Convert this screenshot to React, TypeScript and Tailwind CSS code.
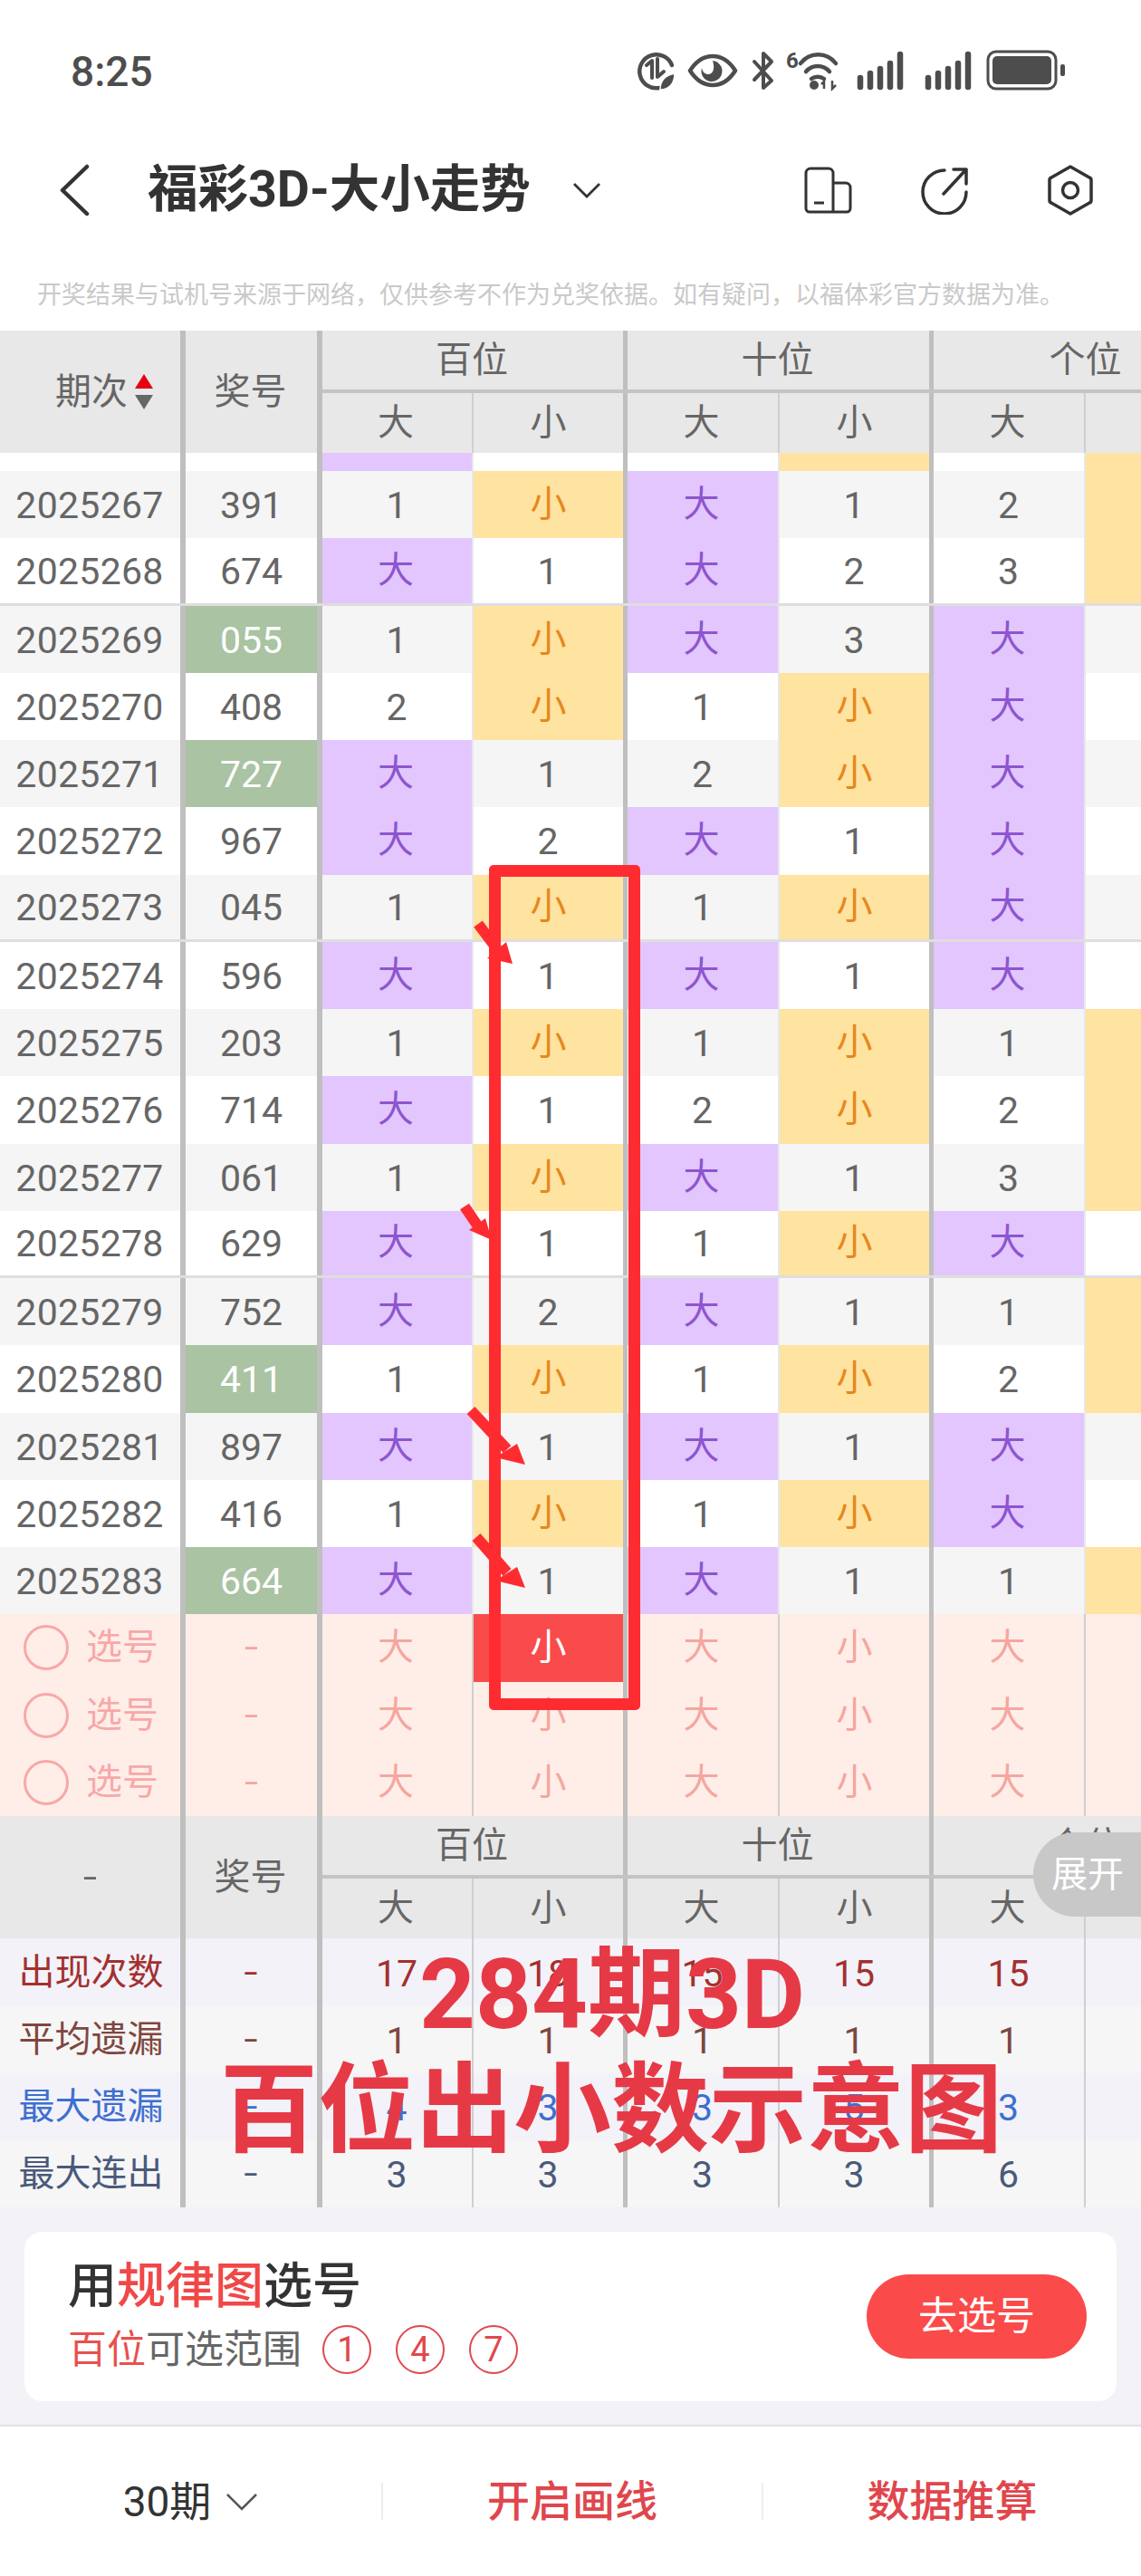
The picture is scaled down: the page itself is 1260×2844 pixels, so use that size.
import React from "react";

const COLS = [
  "w-[205px] border-r-[6px] border-[#bfbfbf]",
  "w-[151px] border-r-[6px] border-[#bfbfbf]",
  "w-[167px] border-r-2 border-[#e8e8e8]",
  "w-[170px] border-r-[5px] border-[#bfbfbf]",
  "w-[168px] border-r-2 border-[#e8e8e8]",
  "w-[170px] border-r-[5px] border-[#bfbfbf]",
  "w-[168px] border-r-2 border-[#e8e8e8]",
  "w-[61px]",
];
const COLS_DARK = [
  "w-[205px] border-r-[6px] border-[#bfbfbf]",
  "w-[151px] border-r-[6px] border-[#bfbfbf]",
  "w-[167px] border-r-2 border-[#cfcfcf]",
  "w-[170px] border-r-[5px] border-[#bfbfbf]",
  "w-[168px] border-r-2 border-[#cfcfcf]",
  "w-[170px] border-r-[5px] border-[#bfbfbf]",
  "w-[168px] border-r-2 border-[#cfcfcf]",
  "w-[61px]",
];

type R = [string, string, boolean, string[]];
const ROWS: R[] = [
  ["2025267", "391", false, ["1", "小", "大", "1", "2", "Y"]],
  ["2025268", "674", false, ["大", "1", "大", "2", "3", "Y"]],
  ["2025269", "055", true, ["1", "小", "大", "3", "大", ""]],
  ["2025270", "408", false, ["2", "小", "1", "小", "大", ""]],
  ["2025271", "727", true, ["大", "1", "2", "小", "大", ""]],
  ["2025272", "967", false, ["大", "2", "大", "1", "大", ""]],
  ["2025273", "045", false, ["1", "小", "1", "小", "大", ""]],
  ["2025274", "596", false, ["大", "1", "大", "1", "大", ""]],
  ["2025275", "203", false, ["1", "小", "1", "小", "1", "Y"]],
  ["2025276", "714", false, ["大", "1", "2", "小", "2", "Y"]],
  ["2025277", "061", false, ["1", "小", "大", "1", "3", "Y"]],
  ["2025278", "629", false, ["大", "1", "1", "小", "大", ""]],
  ["2025279", "752", false, ["大", "2", "大", "1", "1", "Y"]],
  ["2025280", "411", true, ["1", "小", "1", "小", "2", "Y"]],
  ["2025281", "897", false, ["大", "1", "大", "1", "大", ""]],
  ["2025282", "416", false, ["1", "小", "1", "小", "大", ""]],
  ["2025283", "664", true, ["大", "1", "大", "1", "1", "Y"]],
];

function DataCell({ col, v }: { col: number; v: string }) {
  const cls =
    v === "大"
      ? "bg-[#e2c6fd] text-[#8d55cf] pr-[3px]"
      : v === "小" || v === "Y"
        ? "bg-[#fee3a1] text-[#e8871c]"
        : "text-[#666666] text-[41px] pt-[3px] pr-[1px]";
  return (
    <div className={`${COLS[col]} ${cls} shrink-0 flex items-center justify-center`}>
      {v === "Y" ? "" : v}
    </div>
  );
}

function TableHead({ first }: { first: React.ReactNode }) {
  return (
    <div className="flex h-[135px] bg-[#e8e8e8] text-[#666666] overflow-hidden">
      <div className={`${COLS_DARK[0]} shrink-0 flex items-center`}>{first}</div>
      <div className={`${COLS_DARK[1]} shrink-0 flex items-center justify-center pr-[2px]`}>奖号</div>
      <div className="flex flex-col">
        <div className="flex h-[69px] border-b-4 border-[#c4c4c4]">
          <div className="w-[337px] shrink-0 border-r-[5px] border-[#bfbfbf] flex items-center justify-center pr-[2px]">百位</div>
          <div className="w-[338px] shrink-0 border-r-[5px] border-[#bfbfbf] flex items-center justify-center pr-[2px]">十位</div>
          <div className="w-[337px] shrink-0 flex items-center justify-center pr-[2px]">个位</div>
        </div>
        <div className="flex h-[66px]">
          {["大", "小", "大", "小", "大", ""].map((t, i) => (
            <div key={i} className={`${COLS_DARK[i + 2]} ${t === "大" ? "pr-[3px]" : ""} shrink-0 flex items-center justify-center`}>{t}</div>
          ))}
        </div>
      </div>
    </div>
  );
}

function StatRow({ label, vals, cls }: { label: string; vals: string[]; cls: string }) {
  return (
    <div className={`flex h-[74.25px] ${cls}`}>
      <div className={`${COLS_DARK[0]} shrink-0 flex items-center justify-center pl-[2px] text-[40px]`}>{label}</div>
      {vals.concat([""]).map((v, i) => (
        <div
          key={i}
          className={`${COLS_DARK[i + 1]} ${v === "-" ? "text-[56px] font-light pb-[2px]" : "text-[41px] pt-[3px]"} shrink-0 flex items-center justify-center pr-[1px]`}
        >
          {v}
        </div>
      ))}
    </div>
  );
}

function SelectRow({ hot }: { hot?: boolean }) {
  return (
    <div className="flex h-[74.4px] bg-[#ffeee8] text-[#f5a6a0]">
      <div className={`${COLS_DARK[0]} shrink-0 flex items-center pl-[26px] gap-[19px] text-[#f8a8a8]`}>
        <div className="w-[50px] h-[50px] rounded-full border-[3px] border-[#f8a8a8]" />
        <span>选号</span>
      </div>
      <div className={`${COLS_DARK[1]} shrink-0 flex items-center justify-center text-[56px] font-light pb-[2px]`}>-</div>
      {["大", "小", "大", "小", "大", ""].map((t, i) => (
        <div
          key={i}
          className={`${COLS_DARK[i + 2]} ${t === "大" ? "pr-[3px]" : ""} shrink-0 flex items-center justify-center ${hot && i === 1 ? "bg-[#f94b4b] text-white" : ""}`}
        >
          {t}
        </div>
      ))}
    </div>
  );
}

function StatusIcons() {
  return (
    <svg width="480" height="50" viewBox="700 54 480 50" fill="none" className="block">
      <path d="M742 72a18.500 18.500 0 1 0-14 25" stroke="#4d4d4d" strokeWidth="4.500" strokeLinecap="round" />
      <path d="M714 72l6-5v19M726 65v20l7-6" stroke="#4d4d4d" strokeWidth="4" strokeLinecap="round" strokeLinejoin="round" />
      <path d="M729 99c0-11 6-16 16-18 0 10-5 18-16 18z" fill="#4d4d4d" stroke="#fff" strokeWidth="1.500" />
      <path d="M762 78c7-11 16-16 25-16s18 5 25 16c-7 11-16 16-25 16s-18-5-25-16z" stroke="#4d4d4d" strokeWidth="4.500" strokeLinejoin="round" />
      <path d="M787 67a11.500 11.500 0 1 1-12 8c1 5 4 7 7 7 5 0 8-6 5-15z" fill="#4d4d4d" />
      <path d="M833 68l19 21-9 8V76M833 88l19-20-9-9v18" stroke="#4d4d4d" strokeWidth="4" strokeLinejoin="round" strokeLinecap="round" />
      <text x="868" y="75" fontFamily="Roboto" fontSize="24" fontWeight="700" fill="#4d4d4d">6</text>
      <path d="M884 70c10-13 29-13 39 0M890 79c7-8 19-8 26 0M896 87c4-3 10-3 14 0" stroke="#4d4d4d" strokeWidth="4.500" strokeLinecap="round" />
      <circle cx="899" cy="94" r="5" fill="#4d4d4d" />
      <path d="M910 98v-8l-3 3M919 89v9l4-4" stroke="#4d4d4d" strokeWidth="2.500" />
      {[
        [950, 86],
        [961, 81],
        [972, 76],
        [983, 70],
        [994, 60],
        [1025, 86],
        [1036, 81],
        [1047, 76],
        [1058, 70],
        [1069, 60],
      ].map(([x, y]) => (
        <line key={x} x1={x} x2={x} y1={y} y2={96} stroke="#4d4d4d" strokeWidth="6.500" strokeLinecap="round" />
      ))}
      <rect x="1091" y="57" width="75" height="41" rx="9" stroke="#4d4d4d" strokeWidth="3" />
      <rect x="1096" y="62" width="65" height="31" rx="5" fill="#4d4d4d" />
      <rect x="1171" y="71" width="5" height="13" rx="2" fill="#4d4d4d" />
    </svg>
  );
}

function Arrow({ pts, head }: { pts: number[]; head: string }) {
  return (
    <>
      <line x1={pts[0]} y1={pts[1]} x2={pts[2]} y2={pts[3]} stroke="#fe2c30" strokeWidth="12" />
      <polygon points={head} fill="#fe2c30" />
    </>
  );
}

export default function App() {
  return (
    <div className="relative w-[1260px] h-[2844px] overflow-hidden bg-white font-['Roboto','Noto_Sans_CJK_SC',sans-serif] text-[40px] leading-none">
      {/* status bar */}
      <div className="h-[155px] flex items-start justify-between">
        <div className="pl-[78px] pt-[56px] text-[46px] font-medium text-[#4d4d4d]">8:25</div>
        <div className="pt-[54px] pr-[80px]">
          <StatusIcons />
        </div>
      </div>
      {/* nav */}
      <div className="h-[110px] flex items-center pl-[64px] pr-[52px]">
        <svg width="36" height="58" viewBox="0 0 36 58" fill="none">
          <path d="M32 3L5 29l27 26" stroke="#333" strokeWidth="4.500" strokeLinecap="round" strokeLinejoin="round" />
        </svg>
        <div className="ml-[63px] text-[55.5px] font-bold text-[#333333] w-[469px] whitespace-nowrap">福彩3D-大小走势</div>
        <svg width="32" height="18" viewBox="0 0 32 18" fill="none">
          <path d="M2 2l14 14L30 2" stroke="#333" strokeWidth="2.800" />
        </svg>
        <div className="flex-1" />
        <svg width="54" height="52" viewBox="0 0 54 52" fill="none" className="mr-[76px]">
          <path d="M33 34V7a5 5 0 0 0-5-5H8a5 5 0 0 0-5 5v39a4 4 0 0 0 4 4h41a4 4 0 0 0 4-4V23a5 5 0 0 0-5-5H33v32" stroke="#333" strokeWidth="3" />
          <path d="M12 40h11" stroke="#333" strokeWidth="3" />
        </svg>
        <svg width="54" height="54" viewBox="0 0 54 54" fill="none" className="mr-[85px]">
          <path d="M26 5A24 24 0 1 0 50 29M36 4h14v16M50 4L25 31" stroke="#333" strokeWidth="3.500" strokeLinecap="round" strokeLinejoin="round" />
        </svg>
        <svg width="52" height="58" viewBox="0 0 52 58" fill="none">
          <path d="M26 3l21 12a3 3 0 0 1 2 3v22a3 3 0 0 1-2 3L26 55 5 43a3 3 0 0 1-2-3V18a3 3 0 0 1 2-3z" stroke="#333" strokeWidth="3.500" strokeLinejoin="round" />
          <circle cx="26" cy="29" r="8.500" stroke="#333" strokeWidth="3.500" />
        </svg>
      </div>
      {/* disclaimer */}
      <div className="h-[100px] pl-[41px] pt-[48px] text-[27px] text-[#c9c9c9] whitespace-nowrap">
        开奖结果与试机号来源于网络，仅供参考不作为兑奖依据。如有疑问，以福体彩官方数据为准。
      </div>

      {/* table */}
      <TableHead
        first={
          <div className="flex items-center pl-[61px] gap-[8px]">
            <span>期次</span>
            <div className="flex flex-col gap-[7px]">
              <div className="w-0 h-0 border-x-[10px] border-x-transparent border-b-[16px] border-b-[#e60012]" />
              <div className="w-0 h-0 border-x-[10px] border-x-transparent border-t-[16px] border-t-[#666666]" />
            </div>
          </div>
        }
      />
      <div className="flex h-[20px] overflow-hidden">
        {["", "", "大", "", "", "小", "", "Y"].map((v, i) => (
          <div
            key={i}
            className={`${COLS[i]} shrink-0 ${v === "大" ? "bg-[#e2c6fd]" : v ? "bg-[#fee3a1]" : ""}`}
          />
        ))}
      </div>
      {ROWS.map((r, i) => (
        <div
          key={r[0]}
          className={`flex h-[74.25px] ${i % 2 === 0 ? "bg-[#f5f5f5]" : "bg-white"} ${i === 1 || i === 6 || i === 11 ? "border-b-[3px] border-[#dedede]" : ""}`}
        >
          <div className={`${COLS[0]} shrink-0 flex items-center justify-center pt-[3px] pr-[1px] text-[41px] tracking-[0.3px] text-[#666666]`}>{r[0]}</div>
          <div className={`${COLS[1]} shrink-0 flex items-center justify-center pt-[3px] text-[41px] ${r[2] ? "bg-[#a9c3a3] text-white" : "text-[#666666]"}`}>
            {r[1]}
          </div>
          {r[3].map((v, j) => (
            <DataCell key={j} col={j + 2} v={v} />
          ))}
        </div>
      ))}
      <SelectRow hot />
      <SelectRow />
      <SelectRow />

      <TableHead first={<div className="w-full text-center text-[56px] font-light pb-[2px]">-</div>} />
      <StatRow label="出现次数" cls="bg-[#f2f2f8] text-[#a33030]" vals={["-", "17", "18", "15", "15", "15"]} />
      <StatRow label="平均遗漏" cls="bg-[#f6f6f6] text-[#7f4640]" vals={["-", "1", "1", "1", "1", "1"]} />
      <StatRow label="最大遗漏" cls="bg-[#f2f2f8] text-[#3f6fd0]" vals={["-", "4", "3", "3", "5", "3"]} />
      <StatRow label="最大连出" cls="bg-[#f6f6f6] text-[#4a5a7a]" vals={["-", "3", "3", "3", "3", "6"]} />

      {/* rule card */}
      <div className="h-[240px] bg-[#f2f2f7] pt-[27px] px-[27px]">
        <div className="h-[187px] rounded-[20px] bg-white flex items-center pl-[48px] pr-[33px]">
          <div className="flex-1 pt-[4px]">
            <div className="text-[54px] font-medium text-[#333333]">
              用<span className="text-[#f04848]">规律图</span>选号
            </div>
            <div className="mt-[15px] flex items-center text-[43px] text-[#666666]">
              <span className="text-[#e8504f]">百位</span>可选范围
              <div className="ml-[23px] flex gap-[27px]">
                {["1", "4", "7"].map((n) => (
                  <div key={n} className="w-[54px] h-[54px] rounded-full border-2 border-[#e0484c] text-[#e0484c] text-[38px] flex items-center justify-center">
                    {n}
                  </div>
                ))}
              </div>
            </div>
          </div>
          <div className="w-[243px] h-[93px] rounded-full bg-[#fb4a4a] text-white text-[43px] flex items-center justify-center ml-[2px]">去选号</div>
        </div>
      </div>

      {/* bottom nav */}
      <div className="h-[167px] border-t-2 border-[#e2e2e2] flex items-center">
        <div className="w-[421px] flex items-center justify-center gap-[16px] text-[46px] text-[#333333]">
          <span>30期</span>
          <svg width="36" height="20" viewBox="0 0 36 20" fill="none">
            <path d="M2 2l16 16L34 2" stroke="#555" strokeWidth="2.500" />
          </svg>
        </div>
        <div className="w-[2px] h-[41px] bg-[#eeeeee]" />
        <div className="w-[418px] text-center text-[47px] font-medium text-[#e0464c]">开启画线</div>
        <div className="w-[2px] h-[41px] bg-[#eeeeee]" />
        <div className="flex-1 text-center text-[47px] font-medium text-[#e0464c]">数据推算</div>
      </div>

      {/* annotations over the table */}
      <div className="absolute left-[540px] top-[955px] w-[167px] h-[933px] border-[13px] border-[#fe2c30] rounded-[5px]" />
      <svg className="absolute left-0 top-0" width="1260" height="2000" viewBox="0 0 1260 2000" fill="none">
        <Arrow pts={[528, 1020, 552, 1052]} head="559,1040 566,1064 538,1058" />
        <Arrow pts={[513, 1332, 530, 1357]} head="536,1345 543,1369 518,1358" />
        <Arrow pts={[520, 1557, 560, 1600]} head="571,1594 580,1617 547,1609" />
        <Arrow pts={[526, 1697, 560, 1736]} head="571,1730 580,1753 547,1745" />
      </svg>
      <div className="absolute right-0 top-[2023px] w-[119px] h-[93px] rounded-l-[46px] bg-[#c8c8c8] text-white text-[40px] flex items-center pl-[20px]">
        展开
      </div>
      <div className="absolute left-[463px] top-[2132px] text-[108px] font-bold text-[#e63946] whitespace-nowrap leading-[140px]">284期3D</div>
      <div className="absolute left-[243px] top-[2260px] text-[108px] font-bold text-[#e63946] whitespace-nowrap leading-[140px]">百位出小数示意图</div>
    </div>
  );
}
